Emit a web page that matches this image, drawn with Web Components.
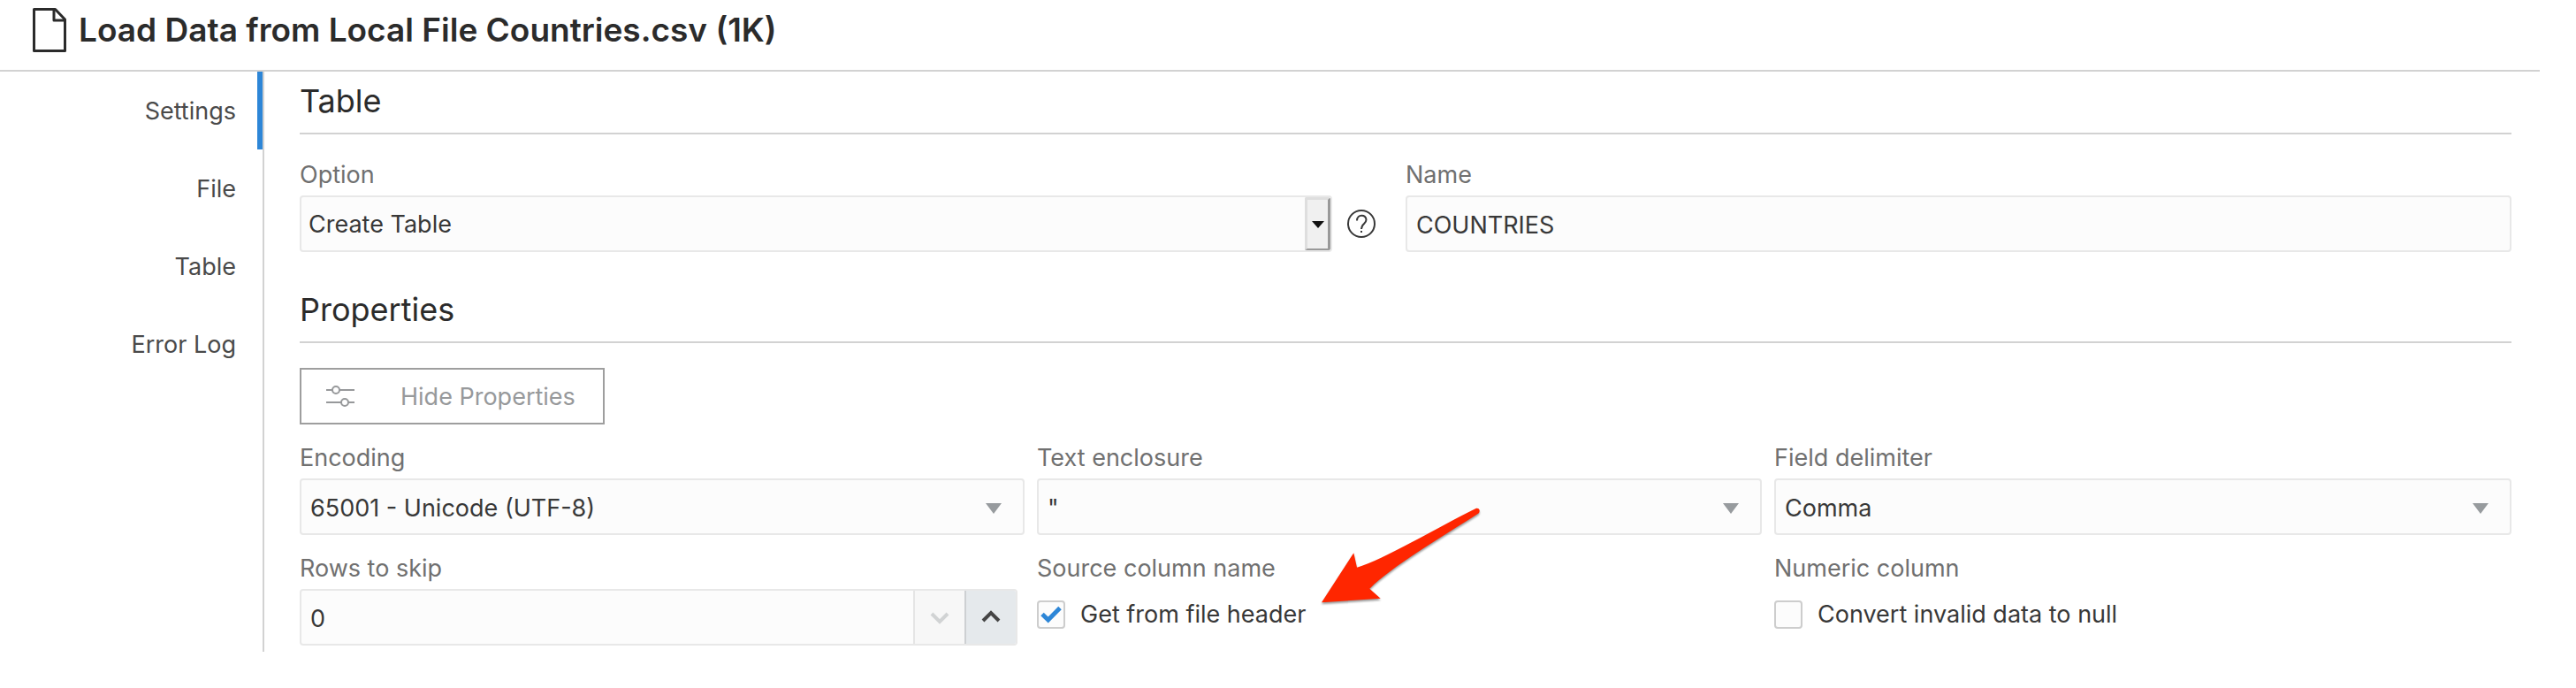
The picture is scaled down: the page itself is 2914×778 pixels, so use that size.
<!DOCTYPE html>
<html lang="en">
<head>
<meta charset="utf-8">
<title>Load Data</title>
<style>
  body { margin: 0; background: #fff; }
</style>
</head>
<body>
<load-wizard>
  <page-title slot="title">Load Data from Local File Countries.csv (1K)</page-title>
  <step-nav slot="nav">
    <step-link href="#settings" active>Settings</step-link>
    <step-link href="#file">File</step-link>
    <step-link href="#table">Table</step-link>
    <step-link href="#errors">Error Log</step-link>
  </step-nav>
  <form-section heading="Table" columns="2">
    <native-select label="Option"><option>Create Table</option></native-select>
    <text-field label="Name" value="COUNTRIES"></text-field>
  </form-section>
  <form-section heading="Properties" columns="3">
    <toggle-button slot="tools">Hide Properties</toggle-button>
    <select-field label="Encoding"><option>65001 - Unicode (UTF-8)</option></select-field>
    <select-field label="Text enclosure"><option>"</option></select-field>
    <select-field label="Field delimiter" wide><option>Comma</option></select-field>
    <number-field label="Rows to skip" value="0"></number-field>
    <check-field label="Source column name" text="Get from file header" checked>
      <pointer-arrow slot="callout"></pointer-arrow>
    </check-field>
    <check-field label="Numeric column" text="Convert invalid data to null" wide></check-field>
  </form-section>
</load-wizard>

<script>
class ShadowElement extends HTMLElement {
  connectedCallback() {
    if (this.shadowRoot) return;
    const template = document.createElement('template');
    template.innerHTML = this.render();
    this.attachShadow({ mode: 'open' }).append(template.content.cloneNode(true));
    this.ready();
  }
  ready() {}
}

customElements.define('load-wizard', class extends ShadowElement {
  render() {
    return `<style>
      :host { display: block; padding-right: 41px; color: #383838; font: 400 27px/36px Inter, "Noto Sans", sans-serif; }
      header { border-bottom: 2px solid #d2d2d2; }
      .body { display: grid; grid-template-columns: auto 1fr; }
      main { padding: 0 32px 7px 40px; display: grid; gap: 32px; min-width: 0; }
    </style>
    <header><slot name="title"></slot></header>
    <div class="body"><slot name="nav"></slot><main><slot></slot></main></div>`;
  }
});

customElements.define('page-title', class extends ShadowElement {
  render() {
    return `<style>
      :host { display: flex; align-items: center; gap: 14px; padding: 0 0 11px 37px; color: #2b2b2b; }
      h1 { margin: 0; font-size: 37px; line-height: 68px; font-weight: 600; }
      svg { display: block; flex: none; }
    </style>
    <svg width="38" height="50" viewBox="0 0 38 50" fill="none" stroke="currentColor" stroke-width="3" stroke-linejoin="round" aria-hidden="true">
      <path d="M1.5 1.5H25.5L36.5 13V48.5H1.5Z"/><path d="M24 1.500V14H36.500" stroke-width="3"/>
    </svg>
    <h1><slot></slot></h1>`;
  }
});

customElements.define('step-nav', class extends ShadowElement {
  render() {
    return `<style>
      :host { display: block; width: 297px; border-right: 2px solid #d2d2d2; }
    </style><nav aria-label="Steps"><slot></slot></nav>`;
  }
});

customElements.define('step-link', class extends ShadowElement {
  render() {
    return `<style>
      :host { display: block; }
      a { display: block; padding: 2px 24px 0 0; border-right: 6px solid transparent; line-height: 86px; text-align: right; color: #4a4a4a; text-decoration: none; }
      :host([active]) a { border-color: #2d86d7; }
    </style><a href="${this.getAttribute('href')}"><slot></slot></a>`;
  }
});

customElements.define('form-section', class extends ShadowElement {
  render() {
    return `<style>
      :host { display: block; }
      h2 { margin: 0 0 28px; padding-bottom: 3px; border-bottom: 2px solid #d2d2d2; font-size: 36px; line-height: 66px; font-weight: 400; color: #2b2b2b; }
      .fields { display: grid; grid-template-columns: repeat(${this.getAttribute('columns')}, minmax(0, 1fr)); row-gap: 20px; }
      ::slotted([slot=tools]) { margin-bottom: 20px; }
    </style>
    <section><h2>${this.getAttribute('heading')}</h2><slot name="tools"></slot>
    <div class="fields"><slot></slot></div></section>`;
  }
});

const fieldStyles = `
  :host { display: block; position: relative; padding-right: 14px; }
  :host([wide]) { padding-right: 0; }
  * { box-sizing: border-box; }
  .label { display: block; margin-bottom: 5px; color: #707070; }
  .box { position: relative; height: 64px; border: 2px solid #e8e8e8; border-radius: 4px; background: #fcfcfc; overflow: hidden; }
  input, select { display: block; width: 100%; height: 100%; margin: 0; border: 0; padding: 2px 10px 0; background: none; color: #383838; font: inherit; appearance: none; outline: 0; border-radius: 0; }
  button { margin: 0; padding: 0; border: 0; background: none; color: inherit; font: inherit; }
  svg { display: block; }
`;

class Field extends ShadowElement {
  get label() { return `<label class="label" for="control">${this.getAttribute('label')}</label>`; }
  ready() {
    const select = this.shadowRoot.querySelector('select');
    if (select) select.append(...this.querySelectorAll('option'));
  }
}

customElements.define('native-select', class extends Field {
  render() {
    return `<style>${fieldStyles}
      :host { padding-right: 34px; }
      .row { display: grid; grid-template-columns: 1fr 32px; gap: 17px; align-items: center; }
      select { padding: 2px 40px 0 8px; }
      .drop { position: absolute; top: 0; right: 0; width: 29px; height: 60px; display: grid; place-items: center; border: 3px solid #dedede; border-right-color: #999; border-bottom: 2px solid #999; background: #f0f0f0; border-radius: 2px; pointer-events: none; }
    </style>
    ${this.label}
    <div class="row">
      <div class="box"><select id="control"></select>
        <span class="drop"><svg width="14" height="8" viewBox="0 0 14 8"><path d="M0 0H14L7 8Z" fill="#111"/></svg></span></div>
      <button type="button" aria-label="Help"><svg width="32" height="32" viewBox="0 0 32 32" fill="none" stroke="#383838" stroke-width="2">
        <circle cx="16" cy="16" r="15"/><path d="M11 12.500C11 5 21.500 5 21.500 11.500C21.500 16 16 16 16 22" /><path d="M15 25h2" stroke-width="2"/></svg></button>
    </div>`;
  }
});

customElements.define('text-field', class extends Field {
  render() {
    return `<style>${fieldStyles} :host { padding-right: 0; }</style>
    ${this.label}<div class="box"><input id="control" type="text" value="${this.getAttribute('value')}"></div>`;
  }
});

customElements.define('select-field', class extends Field {
  render() {
    return `<style>${fieldStyles}
      select { padding-right: 56px; padding-top: 4px; }
      .caret { position: absolute; right: 24px; top: 26px; pointer-events: none; }
    </style>
    ${this.label}<div class="box"><select id="control"></select>
    <svg class="caret" width="18" height="12" viewBox="0 0 18 12"><path d="M0 0H18L9 12Z" fill="#979b9e"/></svg></div>`;
  }
});

customElements.define('number-field', class extends Field {
  render() {
    return `<style>${fieldStyles}
      :host { padding-right: 22px; }
      .box { display: grid; grid-template-columns: 1fr 58px 58px; }
      input { appearance: textfield; }
      input::-webkit-inner-spin-button { appearance: none; margin: 0; }
      button { display: grid; place-items: center; }
      .down { background: #f7f7f7; border-left: 2px solid #e5e5e5; }
      .up { background: #e5e9ec; border-left: 2px solid #cdd0d2; }
    </style>
    ${this.label}<div class="box"><input id="control" type="number" value="${this.getAttribute('value')}">
      <button class="down" type="button" aria-label="Decrease" disabled><svg width="22" height="16" viewBox="0 0 22 16" fill="none" stroke="#d1d3d4" stroke-width="4"><path d="M2 4L11 13L20 4"/></svg></button>
      <button class="up" type="button" aria-label="Increase"><svg width="22" height="16" viewBox="0 0 22 16" fill="none" stroke="#454545" stroke-width="4"><path d="M2 12L11 3L20 12"/></svg></button>
    </div>`;
  }
});

customElements.define('check-field', class extends Field {
  render() {
    return `<style>${fieldStyles}
      .choice { display: flex; align-items: center; gap: 17px; height: 58px; }
      .tick { position: relative; width: 32px; height: 32px; flex: none; }
      input { padding: 0; border: 2px solid #cdcdcd; border-radius: 4px; background: #fcfcfc; }
      .tick svg { position: absolute; inset: 0; pointer-events: none; display: none; }
      input:checked + svg { display: block; }
    </style>
    <span class="label" id="group">${this.getAttribute('label')}</span>
    <label class="choice" for="control"><span class="tick"><input id="control" type="checkbox" aria-describedby="group" ${this.hasAttribute('checked') ? 'checked' : ''}>
      <svg width="32" height="32" viewBox="0 0 32 32" fill="none" stroke="#2d86d7" stroke-width="5"><path d="M6 15.500L12.700 22L26 8.500"/></svg></span>
      <span>${this.getAttribute('text')}</span></label>
    <slot name="callout"></slot>`;
  }
});

customElements.define('toggle-button', class extends ShadowElement {
  render() {
    return `<style>
      :host { display: block; }
      button { box-sizing: border-box; display: flex; align-items: center; gap: 52px; height: 64px; margin: 0; padding: 0 31px 0 28px; border: 2px solid #9e9e9e; border-radius: 0; background: #fff; color: #97999b; font: inherit; }
      span { padding-top: 2px; }
    </style>
    <button type="button" aria-expanded="true"><svg width="32" height="26" viewBox="0 0 32 26" fill="none" stroke="currentColor" stroke-width="2" aria-hidden="true">
      <path d="M0 6H7M15 6H32M0 20H17M25 20H32"/><circle cx="11" cy="6" r="4"/><circle cx="21" cy="20" r="4"/></svg><span><slot></slot></span></button>`;
  }
});

customElements.define('pointer-arrow', class extends ShadowElement {
  render() {
    return `<style>
      :host { position: absolute; left: 267px; top: -85px; pointer-events: none; }
      svg { display: block; overflow: visible; filter: drop-shadow(0 2px 1px rgba(0, 0, 0, .4)); }
    </style>
    <svg width="240" height="150" viewBox="0 0 240 150" aria-hidden="true"><path fill="#ff2600" d="M55 141.300L91.300 85.300L95 101.700C125 93 185 57 229.500 35C233.500 34 235 38 232.500 40.500C190 68 135 100 109.300 125.700L121.700 136.700Z"/></svg>`;
  }
});
</script>
</body>
</html>
